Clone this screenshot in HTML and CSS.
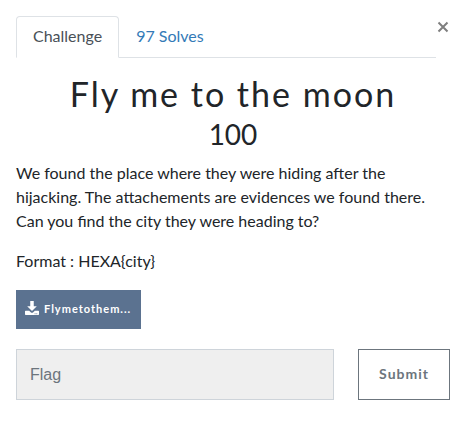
FILE: index.html
```html
<!DOCTYPE html>
<html lang="en">
<head>
<meta charset="utf-8">
<meta name="viewport" content="width=device-width, initial-scale=1">
<title>Fly me to the moon</title>
<link rel="stylesheet" href="styles.css">
</head>
<body>
<main class="challenge">
  <header class="top">
    <nav class="tabs">
      <a class="tab active" href="#challenge">Challenge</a>
      <a class="tab" href="#solves">97 Solves</a>
    </nav>
    <button class="close" type="button" aria-label="Close">
      <svg viewBox="0 0 12 12" width="12" height="12" aria-hidden="true"><path d="M1.500 1.500 10.500 10.500M10.500 1.500 1.500 10.500"/></svg>
    </button>
  </header>
  <h1 class="name">Fly me to the moon</h1>
  <h2 class="value">100</h2>
  <div class="description">
    <p>We found the place where they were hiding after the hijacking. The attachements are evidences we found there. Can you find the city they were heading to?</p>
    <p>Format : HEXA{city}</p>
  </div>
  <a class="file" href="#file">
    <svg viewBox="0 0 512 512" width="14" height="14" aria-hidden="true"><path d="M192 0h128v192h112L256 370 80 192h112zM24 352h130l65 65c20 20 54 20 74 0l65-65h130c13 0 24 11 24 24v112c0 13-11 24-24 24H24c-13 0-24-11-24-24V376c0-13 11-24 24-24zm364 112c0-11-9-20-20-20s-20 9-20 20 9 20 20 20 20-9 20-20zm64 0c0-11-9-20-20-20s-20 9-20 20 9 20 20 20 20-9 20-20z"/></svg>
    <span>Flymetothem...</span>
  </a>
  <form class="answer">
    <input class="flag" type="text" placeholder="Flag" aria-label="Flag">
    <button class="submit" type="submit">Submit</button>
  </form>
</main>
</body>
</html>
```
FILE: styles.css
```css
* {
  box-sizing: border-box;
}

body {
  margin: 0;
  background: #fff;
  color: #212529;
  font: 16px/24px Lato, sans-serif;
}

.challenge {
  padding: 16px;
}

.top {
  display: flex;
  align-items: flex-start;
}

.tabs {
  display: flex;
  flex: 1;
  border-bottom: 1px solid #dee2e6;
}

.tab {
  margin-bottom: -1px;
  padding: 7px 16px 9px;
  border: 1px solid transparent;
  border-radius: 4px 4px 0 0;
  color: #337ab7;
  text-decoration: none;
}

.tab.active {
  border-color: #dee2e6 #dee2e6 #fff;
  background: #fff;
  color: #495057;
}

.close {
  display: flex;
  justify-content: center;
  width: 14px;
  margin-top: 5px;
  padding: 0;
  border: 0;
  background: none;
  cursor: pointer;
}

.close svg {
  flex: none;
  fill: none;
  stroke: #7f7f7f;
  stroke-width: 2;
}

.name,
.value {
  margin: 0;
  font-weight: 400;
  text-align: center;
}

.name {
  margin-top: 16px;
  font-size: 34px;
  line-height: 40px;
  letter-spacing: 2px;
}

.value {
  margin-bottom: 6px;
  font-size: 28px;
  line-height: 41px;
}

.description p {
  margin: 0 0 16px;
}

.file {
  display: inline-flex;
  align-items: center;
  gap: 5px;
  height: 39px;
  padding: 0 10px 0 9px;
  margin-top: 1px;
  background: #5b7290;
  color: #fff;
  font-size: 11px;
  font-weight: 700;
  letter-spacing: 1px;
  text-decoration: none;
}

.file svg {
  flex: none;
  margin-bottom: 3px;
  fill: currentColor;
}

.file span {
  margin-bottom: 2px;
}

.answer {
  display: flex;
  gap: 24px;
  margin-top: 20px;
}

.flag {
  flex: 1;
  min-width: 0;
  height: 51px;
  padding: 0 13px;
  border: 1px solid #ced4da;
  border-radius: 0;
  background: #efefef;
  color: #495057;
  font: 16px "Liberation Sans", sans-serif;
}

.flag::placeholder {
  color: #6c757d;
  opacity: 1;
}

.submit {
  padding: 0 20px 3px;
  border: 1px solid #6c757d;
  background: #fff;
  color: #6c757d;
  font: 700 14px Lato, sans-serif;
  letter-spacing: 1px;
  cursor: pointer;
}
```
